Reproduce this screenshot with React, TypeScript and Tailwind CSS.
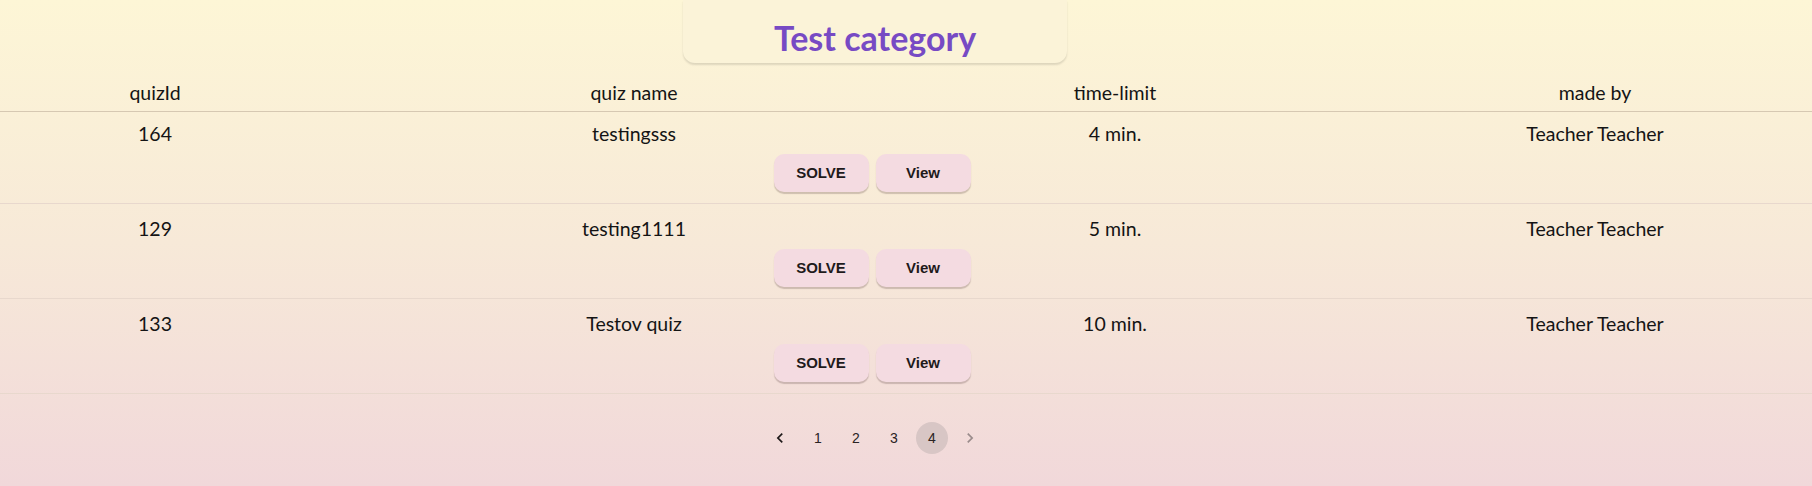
const quizzes = [
  { id: 164, name: "testingsss", time: "4 min.", author: "Teacher Teacher" },
  { id: 129, name: "testing1111", time: "5 min.", author: "Teacher Teacher" },
  { id: 133, name: "Testov quiz", time: "10 min.", author: "Teacher Teacher" },
];

function Chevron({ dir, muted }: { dir: "left" | "right"; muted?: boolean }) {
  return (
    <svg viewBox="0 0 24 24" className="w-5 h-5" fill={muted ? "#9a8c8c" : "#1f1a1a"}>
      {dir === "left" ? (
        <path d="M15.41 7.41 14 6l-6 6 6 6 1.41-1.41L10.83 12z" />
      ) : (
        <path d="M10 6 8.59 7.41 13.17 12l-4.58 4.59L10 18l6-6z" />
      )}
    </svg>
  );
}

function QuizButton({ label }: { label: string }) {
  return (
    <button className="w-[95px] h-[38px] rounded-[10px] bg-[#f4dbe1] text-[#1e1a1b] font-bold text-[15px] font-['Liberation_Sans',Arial,sans-serif] shadow-[0_2px_1px_rgba(60,30,30,0.22)]">
      {label}
    </button>
  );
}

export default function App() {
  return (
    <div className="w-[1812px] h-[486px] overflow-hidden bg-gradient-to-b from-[#fdf6d6] via-[#f7e9d8] to-[#f1d8da] text-[#141414] font-['Lato','Open_Sans',sans-serif]">
      {/* title card */}
      <div className="w-[1750px] flex justify-center">
        <div className="w-[384px] h-[63px] rounded-b-[12px] bg-[#fbf3d8] shadow-[0_2px_2px_rgba(0,0,0,0.12)] flex items-end justify-center pb-[5px]">
          <h1 className="text-[34px] leading-[40px] font-bold text-[#774ac4]">Test category</h1>
        </div>
      </div>

      {/* table header */}
      <div className="grid grid-cols-[310px_648px_314px_1fr] h-[49px] pt-[18px] border-b border-[#d6c8b2] text-[19.5px] leading-[24px]">
        <div className="text-center">quizId</div>
        <div className="text-center">quiz name</div>
        <div className="text-center">time-limit</div>
        <div className="text-center pl-[106px]">made by</div>
      </div>

      {/* rows */}
      {quizzes.map((q, i) => (
        <div
          key={q.id}
          className={`border-b border-[#e8d8cd] pb-[11px] ${i === 0 ? "pt-[10px]" : "pt-[13px]"}`}
        >
          <div className="grid grid-cols-[310px_648px_314px_1fr] text-[19.5px] leading-[24px]">
            <div className="text-center">{q.id}</div>
            <div className="text-center">{q.name}</div>
            <div className="text-center">{q.time}</div>
            <div className="text-center pl-[106px]">{q.author}</div>
          </div>
          <div className="w-[1744px] flex justify-center gap-[7px] mt-[8px]">
            <QuizButton label="SOLVE" />
            <QuizButton label="View" />
          </div>
        </div>
      ))}

      {/* pagination */}
      <div className="w-[1750px] flex justify-center pt-[28px] font-['Liberation_Sans',Arial,sans-serif] text-[14px] text-[#2a2323]">
        <div className="flex items-center">
          <button className="w-8 h-8 mx-[3px] flex items-center justify-center">
            <Chevron dir="left" />
          </button>
          {[1, 2, 3, 4].map((n) => (
            <button
              key={n}
              className={`w-8 h-8 mx-[3px] rounded-full flex items-center justify-center ${
                n === 4 ? "bg-[#d8c6c5]" : ""
              }`}
            >
              {n}
            </button>
          ))}
          <button className="w-8 h-8 mx-[3px] flex items-center justify-center">
            <Chevron dir="right" muted />
          </button>
        </div>
      </div>
    </div>
  );
}
